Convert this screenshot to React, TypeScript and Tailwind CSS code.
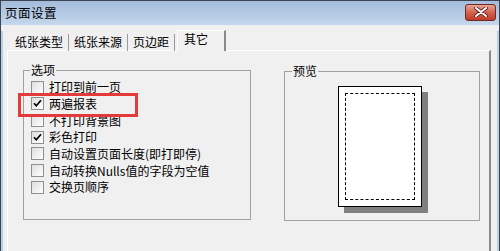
import React from 'react';

const font = { fontFamily: '"Noto Sans CJK SC", "Noto Sans", sans-serif' };

interface Option {
  label: string;
  checked: boolean;
}

const options: Option[] = [
  { label: '打印到前一页', checked: false },
  { label: '两遍报表', checked: true },
  { label: '不打印背景图', checked: false },
  { label: '彩色打印', checked: true },
  { label: '自动设置页面长度(即打即停)', checked: false },
  { label: '自动转换Nulls值的字段为空值', checked: false },
  { label: '交换页顺序', checked: false },
];

const CheckBox: React.FC<{ checked: boolean }> = ({ checked }) => (
  <span className="w-[13px] h-[13px] shrink-0 border border-[#8e8f8f] bg-gradient-to-br from-[#dedede] to-white flex items-center justify-center">
    {checked && (
      <svg width="9" height="9" viewBox="0 0 9 9">
        <path d="M1 4.2 L3.3 6.8 L8 1.2" stroke="#000" strokeWidth="1.7" fill="none" />
      </svg>
    )}
  </span>
);

const tabs = ['纸张类型', '纸张来源', '页边距'];

export default function App() {
  return (
    <div
      className="w-[500px] h-[251px] overflow-hidden bg-[#f0f0f0] border-l border-r border-t border-[#3c4652] text-[12px] text-black leading-none"
      style={font}
    >
      {/* Title bar */}
      <div className="h-[24px] flex items-center justify-between bg-gradient-to-b from-[#a3bcda] to-[#c4d7ec] pl-[4px] pr-[3px]">
        <span className="text-[12.5px] tracking-[0.5px]">页面设置</span>
        <button className="w-[31px] h-[17px] mt-[-2px] rounded-[3px] border border-[#6e2a22] bg-gradient-to-b from-[#e8a592] via-[#d0624f] to-[#c0392b] flex items-center justify-center">
          <svg width="14" height="10" viewBox="0 0 14 10">
            <path d="M2 1 L12 9 M12 1 L2 9" stroke="#5a1c15" strokeWidth="3.6" strokeLinecap="round" />
            <path d="M2 1 L12 9 M12 1 L2 9" stroke="#fff" strokeWidth="2" strokeLinecap="round" />
          </svg>
        </button>
      </div>

      {/* Body with frame */}
      <div className="h-full border-l-2 border-r-2 border-[#b9cfe8] pl-[4px] pr-[6px]">
        {/* Tab strip */}
        <div className="mt-[6px] h-[20px] flex items-end pl-[3px] relative z-10 -mb-px">
          {tabs.map((t) => (
            <div key={t} className="h-[17px] px-[5px] pt-[2px] border-r border-[#9a9a9a] text-[12px]">
              {t}
            </div>
          ))}
          <div className="h-[21px] ml-[2px] w-[49px] pl-[6px] pt-[2px] bg-[#f0f0f0] border-t border-l border-white border-r-2 border-r-[#8a8a8a]">
            其它
          </div>
        </div>

        {/* Tab panel */}
        <div className="h-[220px] border-t border-l border-white border-r-2 border-r-[#8a8a8a] pl-[15px] pt-[19px] flex gap-[33px]">
          {/* Options group */}
          <div className="relative w-[228px] h-[150px] border border-[#a0a0a0] pl-[7px] pt-[8px]">
            <span className="absolute left-[6px] top-[-7px] bg-[#f0f0f0] px-px">选项</span>
            {options.map((o) => (
              <div key={o.label} className="h-[16.67px] flex items-center gap-[5px] whitespace-nowrap">
                <CheckBox checked={o.checked} />
                <span>{o.label}</span>
              </div>
            ))}
            <div className="absolute left-[-6px] top-[22px] w-[120px] h-[24px] border-[3px] border-[#e53a3a]" />
          </div>

          {/* Preview group */}
          <div className="relative w-[196px] h-[150px] mt-[1px] border border-[#a0a0a0]">
            <span className="absolute left-[7px] top-[-7px] bg-[#f0f0f0] px-px">预览</span>
            <div className="ml-[53px] mt-[14px] w-[84px] h-[121px] bg-white border border-black shadow-[6px_6px_0_#808080] p-[6px]">
              <div className="w-full h-full border border-dashed border-black" />
            </div>
          </div>
        </div>
      </div>
    </div>
  );
}
